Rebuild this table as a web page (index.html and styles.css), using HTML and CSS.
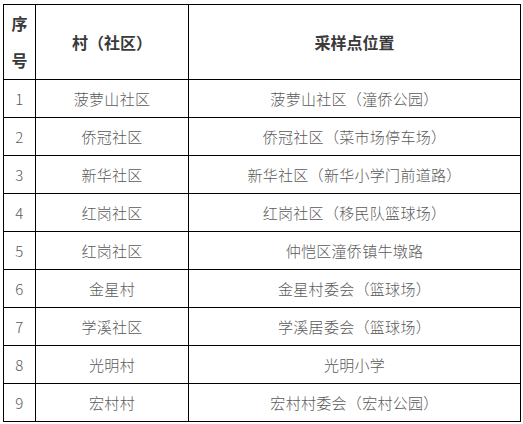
FILE: index.html
```html
<!DOCTYPE html>
<html lang="zh">
<head>
<meta charset="utf-8">
<link rel="stylesheet" href="styles.css">
</head>
<body>
<div class="wrap">
<table class="tbl">
<colgroup><col class="c1"><col class="c2"><col class="c3"></colgroup>
<thead>
<tr><th>序号</th><th>村（社区）</th><th>采样点位置</th></tr>
</thead>
<tbody>
<tr><td>1</td><td>菠萝山社区</td><td>菠萝山社区（潼侨公园）</td></tr>
<tr><td>2</td><td>侨冠社区</td><td>侨冠社区（菜市场停车场）</td></tr>
<tr><td>3</td><td>新华社区</td><td>新华社区（新华小学门前道路）</td></tr>
<tr><td>4</td><td>红岗社区</td><td>红岗社区（移民队篮球场）</td></tr>
<tr><td>5</td><td>红岗社区</td><td>仲恺区潼侨镇牛墩路</td></tr>
<tr><td>6</td><td>金星村</td><td>金星村委会（篮球场）</td></tr>
<tr><td>7</td><td>学溪社区</td><td>学溪居委会（篮球场）</td></tr>
<tr><td>8</td><td>光明村</td><td>光明小学</td></tr>
<tr><td>9</td><td>宏村村</td><td>宏村村委会（宏村公园）</td></tr>
</tbody>
</table>
</div>
</body>
</html>
```
FILE: styles.css
```css
html, body {
  margin: 0;
  padding: 0;
  background: #fff;
}
.wrap {
  padding: 4px 0 0 3px;
}
.tbl {
  border-collapse: collapse;
  table-layout: fixed;
  width: 517px;
  font-family: "Noto Sans CJK SC", "Noto Sans", sans-serif;
}
.c1 { width: 32px; }
.c2 { width: 153px; }
.c3 { width: 332px; }
.tbl th, .tbl td {
  border: 1px solid #000;
  text-align: center;
  vertical-align: middle;
  padding: 0 7px;
}
.tbl th {
  font-size: 16px;
  font-weight: bold;
  color: #3a3a3a;
  line-height: 37px;
  height: 74px;
}
.tbl td {
  font-size: 15px;
  font-weight: 300;
  color: #5a5a5a;
  line-height: 37px;
  height: 37px;
  letter-spacing: 0.3px;
}
```
